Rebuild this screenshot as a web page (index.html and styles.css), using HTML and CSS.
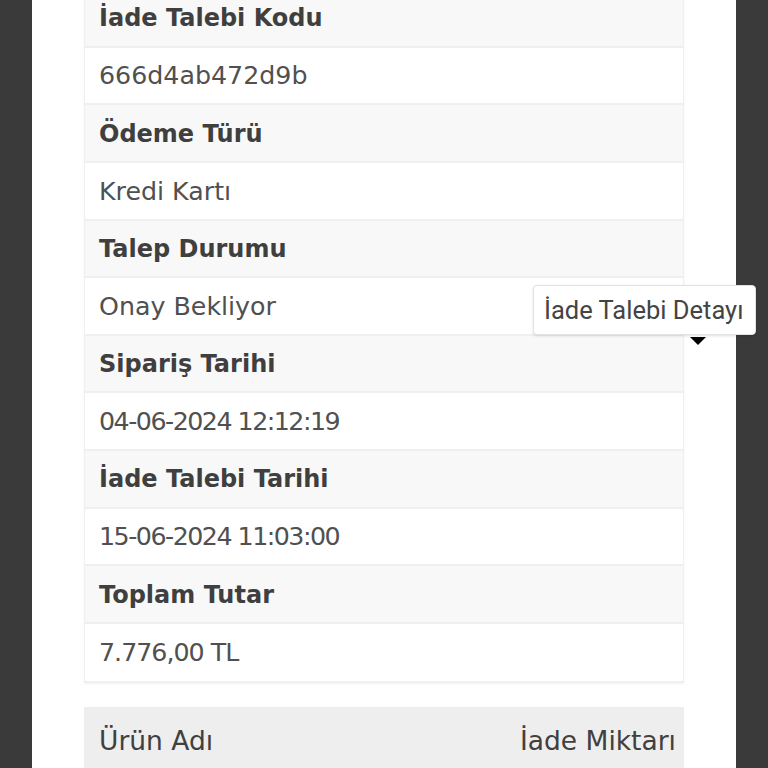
FILE: index.html
```html
<!DOCTYPE html>
<html lang="tr">
<head>
<meta charset="utf-8">
<link rel="stylesheet" href="styles.css">
</head>
<body>
<div class="page">
  <div class="panel">
    <div class="details">
      <div class="row head">İade Talebi Kodu</div>
      <div class="row val">666d4ab472d9b</div>
      <div class="row head">Ödeme Türü</div>
      <div class="row val">Kredi Kartı</div>
      <div class="row head">Talep Durumu</div>
      <div class="row val">Onay Bekliyor</div>
      <div class="row head">Sipariş Tarihi</div>
      <div class="row val date">04-06-2024 12:12:19</div>
      <div class="row head">İade Talebi Tarihi</div>
      <div class="row val date">15-06-2024 11:03:00</div>
      <div class="row head">Toplam Tutar</div>
      <div class="row val amount last">7.776,00 TL</div>
    </div>
    <div class="products">
      <div class="prod-head">
        <span>Ürün Adı</span>
        <span>İade Miktarı</span>
      </div>
    </div>
  </div>
  <div class="tooltip">İade Talebi Detayı</div>
  <div class="tip-arrow"></div>
</div>
</body>
</html>
```

FILE: styles.css
```css
html, body {
  margin: 0;
  padding: 0;
}
body {
  background: #3a3a3a;
  width: 768px;
  height: 768px;
  overflow: hidden;
}
.page {
  position: relative;
  width: 768px;
  height: 768px;
  padding: 0 32px;
  box-sizing: border-box;
}
.panel {
  background: #ffffff;
  height: 768px;
  padding-left: 52px;
  padding-right: 52px;
  overflow: hidden;
}
.details {
  width: 600px;
  margin-top: -10px;
  border-left: 1px solid #f0f0f0;
  border-right: 1px solid #f0f0f0;
  box-sizing: border-box;
  box-shadow: 0 2px 2px rgba(0,0,0,0.06);
}
.row {
  height: 57.64px;
  box-sizing: border-box;
  border-bottom: 2px solid #efefef;
  display: flex;
  align-items: center;
  padding-left: 14px;
  padding-top: 1px;
  font-family: "DejaVu Sans", sans-serif;
  font-size: 24px;
  color: #454545;
}
.row.head {
  background: #f8f8f8;
  font-weight: bold;
  color: #3f3f3f;
}
.row.val {
  background: #ffffff;
  font-weight: normal;
  font-size: 25.3px;
  color: #505050;
}
.row.date {
  letter-spacing: -1.5px;
}
.row.amount {
  letter-spacing: -1px;
}
.row.last {
  border-bottom: 1px solid #eeeeee;
}
.products {
  width: 600px;
  margin-top: 25px;
}
.prod-head {
  background: #eeeeee;
  height: 68px;
  display: flex;
  justify-content: space-between;
  align-items: center;
  padding: 0 8px 0 15px;
  font-family: "DejaVu Sans", sans-serif;
  font-size: 26.5px;
  color: #404040;
}
.tooltip {
  position: absolute;
  left: 533px;
  top: 285px;
  width: 223px;
  height: 50px;
  box-sizing: border-box;
  background: #ffffff;
  border: 1px solid #e2e2e2;
  border-radius: 4px;
  box-shadow: 0 1px 3px rgba(0,0,0,0.12);
  font-family: Roboto, sans-serif;
  font-size: 25.5px;
  color: #444444;
  display: flex;
  align-items: center;
  padding-left: 10px;
  white-space: nowrap;
}
.tip-arrow {
  position: absolute;
  left: 690px;
  top: 337px;
  width: 0;
  height: 0;
  border-left: 8px solid transparent;
  border-right: 8px solid transparent;
  border-top: 8px solid #000000;
}
```
